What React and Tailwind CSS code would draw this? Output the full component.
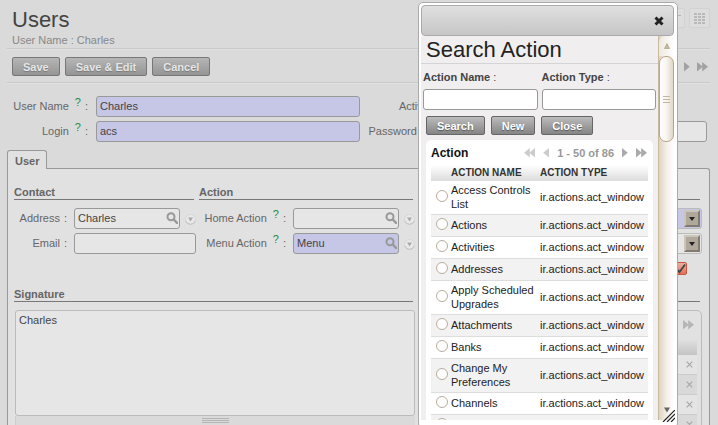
import React from "react";

const ACTIONS = [
  "Access Controls List",
  "Actions",
  "Activities",
  "Addresses",
  "Apply Scheduled Upgrades",
  "Attachments",
  "Banks",
  "Change My Preferences",
  "Channels",
];

function Arrow({ double = false, left = false, className = "" }) {
  return (
    <svg
      aria-hidden="true"
      className={className}
      width={double ? 11 : 6}
      height="10"
      viewBox={double ? "0 0 11 10" : "0 0 6 10"}
      fill="currentColor"
    >
      <g transform={left ? `translate(${double ? 11 : 6} 0) scale(-1 1)` : undefined}>
        <path d="M0 0 L5.8 4.8 L0 9.6 Z" />
        {double && <path d="M5.2 0 L11 4.8 L5.2 9.6 Z" />}
      </g>
    </svg>
  );
}

function Button({ children, dim = false }) {
  return (
    <button
      type="button"
      className={
        dim
          ? "h-[19px] rounded-[2px] border border-[#777] bg-linear-to-b from-[#b6b6b6] to-[#959595] px-2.5 text-[11px] leading-[16px] font-bold text-[#e6e6e6] text-shadow-[0_1px_1px_#777]"
          : "h-[19px] rounded-[2px] border border-[#666] bg-linear-to-b from-[#bcbcbc] to-[#858585] px-2.5 text-[11px] leading-[16px] font-bold text-white text-shadow-[0_1px_1px_#555]"
      }
    >
      {children}
    </button>
  );
}

function Label({ htmlFor, children, help = false, className = "" }) {
  return (
    <label htmlFor={htmlFor} className={`flex h-[21px] shrink-0 items-center justify-end pb-[2px] whitespace-nowrap text-[#666] ${className}`}>
      {children}
      {help && <span className="ml-1.5 self-start leading-[12px] text-[#2b8a35]">?</span>}
      <span className="ml-1">:</span>
    </label>
  );
}

function TextInput({ id, value = "", required = false, type = "text" }) {
  return (
    <input
      id={id}
      type={type}
      defaultValue={value}
      className={`h-[21px] w-full min-w-0 rounded-[3px] border border-[#999] px-[3px] pb-[2px] text-[#444] outline-none ${required ? "bg-[#c6c6e6]" : "bg-[#e6e6e6]"}`}
    />
  );
}

function Lookup({ id, value, required }) {
  return (
    <div className="flex min-w-0 flex-1 items-center gap-[5px]">
      <div className="relative min-w-0 flex-1">
        <TextInput id={id} value={value} required={required} />
        <svg aria-hidden="true" className="absolute top-1 right-[2px]" width="12" height="12" viewBox="0 0 12 12" fill="none" stroke="#999">
          <circle cx="5" cy="4.7" r="3.5" strokeWidth="2" />
          <path d="M7.8 7.5 L11 10.8" strokeWidth="2.4" strokeLinecap="round" />
        </svg>
      </div>
      <button type="button" aria-label="Open menu" className="mt-0.5 size-[11px]">
        <svg width="11" height="11" viewBox="0 0 11 11">
          <circle cx="5.5" cy="5.5" r="5" fill="#e8e8e8" stroke="#d6d6d6" />
          <path d="M0.8 7 A5 5 0 0 0 10.2 7" fill="none" stroke="#c0c0c0" />
          <path d="M3 3.5 H8 L5.5 7.5 Z" fill="#aaa" />
        </svg>
      </button>
    </div>
  );
}

function Choice({ id, label, required = false }) {
  return (
    <div className="-mr-[2px] flex h-[21px]">
      <div className={`flex min-w-0 flex-1 rounded-[3px] border border-[#bbb] p-px ${required ? "bg-[#c6c6e6]" : "bg-[#e6e6e6]"}`}>
        <select id={id} aria-label={label} className="min-w-0 flex-1 appearance-none bg-transparent outline-none" />
        <span className="flex w-[16px] items-center justify-center border-2 border-t-[#ccc5bb] border-r-[#827b70] border-b-[#827b70] border-l-[#ccc5bb] bg-[#b0a89a]">
          <svg aria-hidden="true" width="6" height="4" viewBox="0 0 6 4">
            <path d="M0 0 H6 L3 4 Z" fill="#222" />
          </svg>
        </span>
      </div>
    </div>
  );
}

function Heading({ children }) {
  return <h2 className="h-[15px] border-b border-[#777] leading-[14px] font-bold text-[#666]">{children}</h2>;
}

function RecordList() {
  return (
    <div className="mt-2 -mr-[2px] h-[130px] rounded-t-[5px] border border-[#bbb] px-1 text-[#aaa]">
      <div className="flex h-[28px] items-center justify-end pr-[3px]">
        <Arrow double className="text-[#b6b6b6]" />
      </div>
      <div className="h-[16px] bg-linear-to-b from-[#e1e1e1] to-[#c4c4c4]" />
      {[0, 1, 2, 3].map((row) => (
        <div key={row} className="flex h-[20px] items-center justify-end border-b border-[#ccc] pr-[4px] odd:bg-[#e4e4e4] even:bg-[#d9d9d9]">
          <button type="button" aria-label="Remove">
            <svg width="7" height="7" viewBox="0 0 7 7" stroke="#a8a8a8" strokeWidth="1.2">
              <path d="M0.7 0.7 L6.3 6.3 M6.3 0.7 L0.7 6.3" />
            </svg>
          </button>
        </div>
      ))}
    </div>
  );
}

function UserForm() {
  return (
    <main className="pr-2 pl-[7px]">
      <header className="flex justify-between border-b border-[#c9c9c9] pt-2 pb-px shadow-[0_1px_0_#e2e2e2]">
        <div className="pl-[5px]">
          <h1 className="text-[22px] leading-[24px] text-[#444]">Users</h1>
          <p className="mt-px leading-[14px] text-[#888]">User Name : Charles</p>
        </div>
        <div className="flex gap-1">
          <button type="button" aria-label="Form view" className="flex h-[20px] w-[21px] items-center justify-center rounded-[2px] border border-[#d2d2d2] bg-[#dddddd]">
            <svg width="13" height="9" viewBox="0 0 13 9" stroke="#b4b4b4">
              <path d="M0 1.5 H13 M0 4.5 H9 M0 7.5 H9" />
            </svg>
          </button>
          <button type="button" aria-label="Grid view" className="flex h-[20px] w-[21px] items-center justify-center rounded-[2px] border border-[#d2d2d2] bg-[#dddddd]">
            <svg width="11" height="11" viewBox="0 0 11 11" fill="#b9b9b9">
              {[0, 3, 6, 9].map((y) =>
                [0, 4, 8].map((x) => <rect key={`${x}-${y}`} x={x} y={y} width="3" height="2" />)
              )}
            </svg>
          </button>
        </div>
      </header>

      <div className="flex items-center justify-between border-b border-[#c9c9c9] pt-2 pr-[2px] pb-1.5 pl-[5px] shadow-[0_1px_0_#e2e2e2]">
        <div className="flex gap-[5px]">
          <Button dim>Save</Button>
          <Button dim>Save &amp; Edit</Button>
          <Button dim>Cancel</Button>
        </div>
        <nav aria-label="Records" className="flex gap-[7px] text-[#a2a2a2]">
          <button type="button" aria-label="Next"><Arrow /></button>
          <button type="button" aria-label="Last"><Arrow double /></button>
        </nav>
      </div>

      <section className="grid grid-cols-[84px_264fr_76px_261fr] gap-x-[5px] gap-y-1 pt-[13px] pr-[3px]">
        <Label htmlFor="user-name" help className="pr-[3px]">User Name</Label>
        <TextInput id="user-name" value="Charles" required />
        <Label htmlFor="active" className="pr-[5px]">Active</Label>
        <input id="active" type="checkbox" className="size-3 self-center" />
        <Label htmlFor="login" help className="pr-[3px]">Login</Label>
        <TextInput id="login" value="acs" required />
        <Label htmlFor="password" help className="pr-[5px]">Password</Label>
        <TextInput id="password" type="password" />
      </section>

      <button type="button" className="relative mt-2 -mb-px block h-[19px] rounded-t-[3px] border border-b-0 border-[#999] bg-[#e1e1e1] px-[7px] pt-px text-[11px] font-bold text-[#666]">
        User
      </button>
      <section className="grid grid-cols-[182fr_216fr_282fr] gap-x-[3px] gap-y-[33px] rounded-tr-[3px] border border-b-0 border-[#999] bg-[#e1e1e1] pt-4 pr-[9px] pl-1.5">
        <div>
          <div className="mr-[2px]"><Heading>Contact</Heading></div>
          <div className="mt-2 flex flex-col gap-1">
            <div className="flex gap-[7px]">
              <Label htmlFor="address" className="w-[53px]">Address</Label>
              <Lookup id="address" value="Charles" />
            </div>
            <div className="flex gap-[7px]">
              <Label htmlFor="email" className="w-[53px]">Email</Label>
              <TextInput id="email" />
            </div>
          </div>
        </div>
        <div>
          <div className="mr-[2px]"><Heading>Action</Heading></div>
          <div className="mt-2 flex flex-col gap-1">
            <div className="flex gap-[7px]">
              <Label htmlFor="home-action" help className="w-[87px]">Home Action</Label>
              <Lookup id="home-action" />
            </div>
            <div className="flex gap-[7px]">
              <Label htmlFor="menu-action" help className="w-[87px]">Menu Action</Label>
              <Lookup id="menu-action" value="Menu" required />
            </div>
          </div>
        </div>
        <div className="h-[69px]">
          <div className="h-[15px] border-b border-[#777]" />
          <div className="mt-2 flex flex-col gap-1">
            <Choice id="language" label="Language" required />
            <Choice id="timezone" label="Timezone" />
          </div>
          <div className="mt-2 flex justify-end pr-[13px]">
            <div className="relative h-[13px] w-[14px]">
              <input type="checkbox" defaultChecked aria-label="Simplified view" className="block h-full w-full appearance-none rounded-[2px] border border-[#c9573f] bg-linear-to-b from-[#e8b0a4] to-[#e0705c]" />
              <svg aria-hidden="true" className="pointer-events-none absolute inset-0" width="14" height="13" viewBox="0 0 14 13" fill="none" stroke="#444" strokeWidth="1.8">
                <path d="M3 6.5 L6.5 10 L12 2.5" />
              </svg>
            </div>
          </div>
        </div>
        <div className="col-span-2">
          <div className="mr-[2px]"><Heading><label htmlFor="signature">Signature</label></Heading></div>
          <textarea
            id="signature"
            defaultValue="Charles"
            className="mt-2 ml-px block h-[106px] w-[calc(100%-1px)] resize-none rounded-[3px] border border-[#bbb] bg-[#e6e6e6] px-[3px] py-[2px] leading-[14px] text-[#444] outline-none"
          />
          <div className="ml-px flex h-3 justify-center border-l border-[#ccc] bg-[#dadada] pt-[2px]">
            <svg aria-hidden="true" width="27" height="6" viewBox="0 0 27 6" stroke="#b4b4b4">
              <path d="M0 0.5 H27 M0 2.5 H27 M0 4.5 H27" />
            </svg>
          </div>
        </div>
        <div>
          <div className="h-[15px] border-b border-[#777]" />
          <RecordList />
        </div>
      </section>
    </main>
  );
}

function ActionTable() {
  return (
    <table className="w-full table-fixed border-collapse text-[#222]">
      <colgroup>
        <col className="w-5" />
        <col className="w-[89px]" />
        <col />
      </colgroup>
      <thead>
        <tr className="h-[16px] bg-linear-to-b from-white to-[#dcdcdc] text-left text-[10px] leading-[12px] text-[#333]">
          <th className="p-0" aria-label="Select" />
          <th className="p-0">ACTION NAME</th>
          <th className="p-0">ACTION TYPE</th>
        </tr>
      </thead>
      <tbody>
        {ACTIONS.map((name) => (
          <tr key={name} className="h-[22px] border-b border-[#ddd] leading-[14px] even:bg-[#f2f2f2]">
            <td className="p-0 pb-1 pl-[5px]">
              <input type="radio" name="action" aria-label={name} className="block size-[12px] appearance-none rounded-full border border-[#b9ac9b] bg-white" />
            </td>
            <td className="p-0 pt-[2px] pb-[3px]">{name}</td>
            <td className="p-0 pt-[2px] pb-[3px]">ir.actions.act_window</td>
          </tr>
        ))}
        <tr className="h-[22px] bg-[#f2f2f2]">
          <td className="p-0 pb-1 pl-[5px]">
            <input type="radio" name="action" aria-label="Next action" className="block size-[12px] appearance-none rounded-full border border-[#b9ac9b] bg-white" />
          </td>
          <td />
          <td />
        </tr>
      </tbody>
    </table>
  );
}

function Scrollbar() {
  return (
    <div aria-hidden="true" className="flex w-4 shrink-0 flex-col items-center border-l border-[#c9b99f] bg-linear-to-r from-[#dfd3c0] via-[#f4efe8] to-white">
      <div className="flex h-5 w-full items-center justify-center rounded-t-[7px] bg-linear-to-r from-[#eee8de] to-white">
        <svg width="6" height="6" viewBox="0 0 6 6"><path d="M3 0.5 L5.5 5.5 H0.5 Z" fill="#c5b9a0" stroke="#a39778" strokeWidth="0.6" /></svg>
      </div>
      <div className="flex h-[86px] w-full items-center justify-center rounded-[7px] border border-[#b8a888] bg-linear-to-r from-white via-[#f8f5f0] to-[#e0d6c6]">
        <svg width="7" height="7" viewBox="0 0 7 7" stroke="#c3b69d"><path d="M0 0.5 H7 M0 3.5 H7 M0 6.5 H7" /></svg>
      </div>
      <svg className="mt-auto mb-[7px]" width="6" height="6" viewBox="0 0 6 6"><path d="M0 0.5 H6 L3 5.5 Z" fill="#666" /></svg>
    </div>
  );
}

function SearchDialog() {
  return (
    <div role="dialog" aria-label="Search Action" className="absolute top-[2px] right-10 -bottom-[3px] flex w-[260px] flex-col rounded-[5px] border border-[#aaa] bg-white pt-[2px] pr-[3px] pb-[7px] pl-[2px]">
      <div className="flex h-[31px] shrink-0 items-center justify-end rounded-[4px] border border-[#aaa] bg-linear-to-b from-[#e0e0e0] to-[#c6c6c6] pr-[9px]">
        <button type="button" aria-label="Close dialog">
          <svg width="10" height="10" viewBox="0 0 10 10" stroke="#222" strokeWidth="3">
            <path d="M1.5 1.5 L8.5 8.5 M8.5 1.5 L1.5 8.5" />
          </svg>
        </button>
      </div>
      <div className="flex min-h-0 flex-1">
        <div className="min-w-0 flex-1 overflow-hidden bg-[#f0eeee]">
          <h1 className="border-b border-[#d4d4d4] pt-[2px] pb-px pl-[5px] text-[22px] leading-[24px] text-[#222]">Search Action</h1>
          <div className="grid grid-cols-2 gap-1 pt-1.5 pr-[2px] pl-[2px] text-[#444]">
            <div>
              <label htmlFor="action-name" className="block leading-[14px]"><b>Action Name</b> :</label>
              <input id="action-name" className="mt-[5px] block h-[21px] w-full rounded-[3px] border border-[#999] bg-white px-[3px] outline-none" />
            </div>
            <div>
              <label htmlFor="action-type" className="block leading-[14px]"><b>Action Type</b> :</label>
              <input id="action-type" className="mt-[5px] block h-[21px] w-full rounded-[3px] border border-[#999] bg-white px-[3px] outline-none" />
            </div>
          </div>
          <div className="flex gap-1.5 pt-1.5 pl-[5px]">
            <Button>Search</Button>
            <Button>New</Button>
            <Button>Close</Button>
          </div>
          <section className="mt-[5px] mr-[5px] ml-[5px] rounded-t-[5px] bg-white px-[5px]">
            <div className="flex h-[25px] items-center justify-between pr-px">
              <h2 className="text-[12px] font-bold text-[#111]">Action</h2>
              <nav aria-label="Pages" className="flex items-center gap-2 font-bold text-[#999]">
                <button type="button" aria-label="First page"><Arrow double left className="text-[#ccc]" /></button>
                <button type="button" aria-label="Previous page"><Arrow left className="text-[#ccc]" /></button>
                <span>1 - 50 of 86</span>
                <button type="button" aria-label="Next page"><Arrow className="text-[#aaa]" /></button>
                <button type="button" aria-label="Last page"><Arrow double className="text-[#aaa]" /></button>
              </nav>
            </div>
            <ActionTable />
          </section>
        </div>
        <Scrollbar />
      </div>
      <svg aria-hidden="true" className="absolute right-[2px] bottom-[5px]" width="13" height="12" viewBox="0 0 13 12" stroke="#222" strokeWidth="1.2">
        <path d="M1 12 L13 0 M5 12 L13 4 M9 12 L13 8" />
      </svg>
    </div>
  );
}

export default function App() {
  return (
    <div className="relative h-screen overflow-hidden bg-[#dadada] font-['Liberation_Sans',Arial,sans-serif] text-[11px] leading-[14px]">
      <UserForm />
      <SearchDialog />
    </div>
  );
}
